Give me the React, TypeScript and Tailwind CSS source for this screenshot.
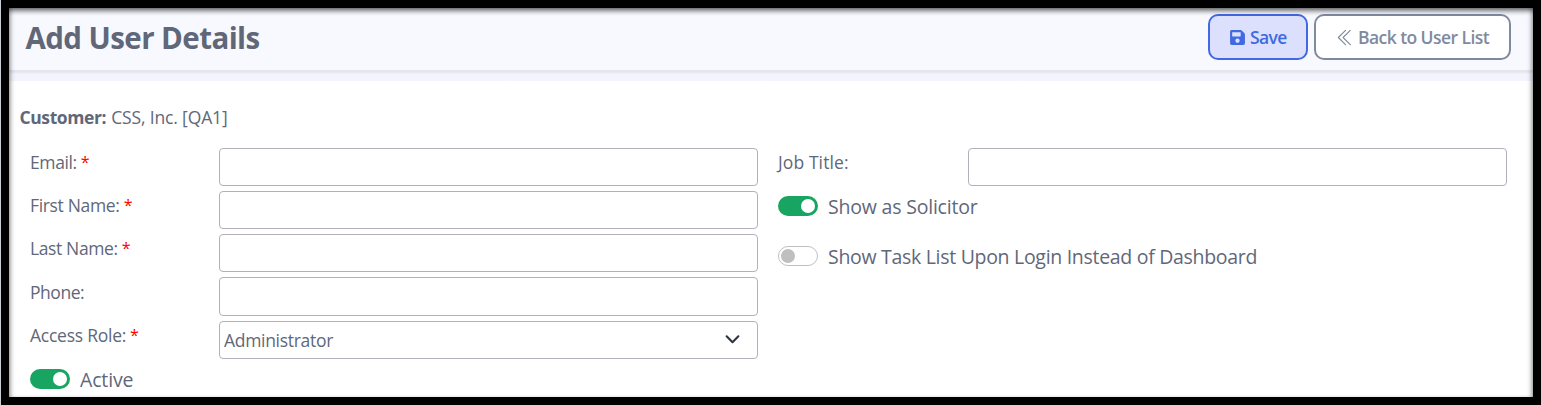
import type { ReactNode } from "react";
import { FaSave } from "react-icons/fa";
import { BsChevronDoubleLeft } from "react-icons/bs";

function Label({ text, required, className }: { text: string; required?: boolean; className: string }) {
  return (
    <div className="flex w-[189px] shrink-0 whitespace-nowrap text-[17.5px] leading-[29px]">
      <span className={className}>{text}</span>
      {required && <span className="ml-[4px] text-[16px] text-[#ff0000]">*</span>}
    </div>
  );
}

function Row({ children }: { children: ReactNode }) {
  return <div className="flex h-[43.2px] items-start">{children}</div>;
}

function Field({ children }: { children?: ReactNode }) {
  return (
    <div className="flex h-[38.2px] w-[539px] items-center justify-between rounded-[4px] border border-[#b0b1ba] bg-white pr-[16px] pl-[4px]">
      {children}
    </div>
  );
}

function Toggle({ on, text, className }: { on?: boolean; text: string; className: string }) {
  return (
    <div className="flex h-5 items-center gap-[10px]">
      {on ? (
        <span className="flex h-5 w-10 items-center justify-end rounded-full bg-[#18a561] pr-[3px]">
          <span className="size-[14px] rounded-full bg-white" />
        </span>
      ) : (
        <span className="flex h-5 w-10 items-center rounded-full border border-[#bfbfbf] bg-white pl-[2px]">
          <span className="size-[14px] rounded-full bg-[#bfbfbf]" />
        </span>
      )}
      <span className={`pt-[2px] whitespace-nowrap text-[19.5px] leading-[28px] ${className}`}>{text}</span>
    </div>
  );
}

export default function App() {
  return (
    <div className="h-[405px] w-[1541px] overflow-hidden border-l border-[#c8ccd4] bg-black pt-2 pr-2 pb-2 pl-2 font-['Open_Sans',sans-serif] text-[#5f6779]">
      <div className="relative flex h-[389px] w-[1524px] flex-col bg-white">
        <header className="flex h-[62px] shrink-0 items-start justify-between bg-[#f8f9ff] pr-[22px] pl-[16.5px]">
          <h1 className="mt-[10px] text-[29.5px] leading-[40px] font-bold tracking-[-0.58px] whitespace-nowrap">Add User Details</h1>
          <div className="mt-[6px] flex gap-[6px] text-[17.5px] font-semibold">
            <button className="flex h-[46px] w-[100px] items-center gap-[4px] rounded-[10px] border-2 border-[#4169e1] bg-[#dde0fc] pl-[19px] text-[#4169e1]">
              <FaSave className="size-[17px]" />
              <span className="pt-px tracking-[-0.6px]">Save</span>
            </button>
            <button className="flex h-[46px] w-[197px] items-center gap-[3.5px] rounded-[10px] border-2 border-[#808a9f] bg-white pl-[19.5px] text-[#808a9f]">
              <BsChevronDoubleLeft className="size-[19px] shrink-0" />
              <span className="pt-px tracking-[-0.56px] whitespace-nowrap">Back to User List</span>
            </button>
          </div>
        </header>
        <div className="h-[11px] shrink-0 bg-linear-to-b from-[#e5e6eb] from-15% to-[#f3f4fe] to-40%" />
        <main className="flex grow flex-col pl-[10.5px]">
          <div className="mt-[22px] h-[28px] text-[17.5px] leading-[28px] whitespace-nowrap">
            <b className="mr-[5px] tracking-[-0.4px]">Customer:</b>
            <span className="tracking-[-0.15px]">CSS, Inc. [QA1]</span>
          </div>
          <div className="mt-[16.8px] flex pl-[10.5px]">
            <div className="w-[748px]">
              <Row><Label text="Email:" required className="tracking-[-0.4px]" /><Field /></Row>
              <Row><Label text="First Name:" required className="tracking-[-0.33px]" /><Field /></Row>
              <Row><Label text="Last Name:" required className="tracking-[-0.38px]" /><Field /></Row>
              <Row><Label text="Phone:" className="pt-[0.6px] tracking-[-0.45px]" /><Field /></Row>
              <Row>
                <Label text="Access Role:" required className="tracking-[-0.25px]" />
                <Field>
                  <span className="text-[17.5px] leading-[26px] tracking-[-0.3px]">Administrator</span>
                  <svg viewBox="0 0 16 16" className="size-[17px] text-[#2f3542]" fill="none" stroke="currentColor" strokeWidth="2" strokeLinecap="round" strokeLinejoin="round">
                    <path d="m2.5 5 5.5 5.5L13.5 5" />
                  </svg>
                </Field>
              </Row>
              <div className="mt-[5.2px]"><Toggle on text="Active" className="tracking-[-0.15px]" /></div>
            </div>
            <div>
              <div className="flex h-[43.2px] items-start gap-px">
                <Label text="Job Title:" className="tracking-[0.1px]" />
                <Field />
              </div>
              <div className="mt-[5px] flex flex-col gap-[30px]">
                <Toggle on text="Show as Solicitor" className="tracking-[-0.2px]" />
                <Toggle text="Show Task List Upon Login Instead of Dashboard" className="tracking-[-0.3px]" />
              </div>
            </div>
          </div>
        </main>
        <div className="pointer-events-none absolute inset-0 shadow-[inset_0_5px_5px_-2px_rgba(0,0,0,0.55),inset_4px_0_4px_-2px_rgba(0,0,0,0.3),inset_-4px_0_4px_-2px_rgba(0,0,0,0.3)]" />
      </div>
    </div>
  );
}
